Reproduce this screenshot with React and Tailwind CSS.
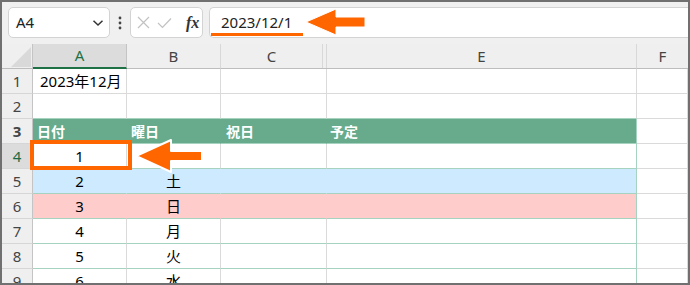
import React from "react";

const FONT = { fontFamily: "'Noto Sans', 'Noto Sans CJK JP', sans-serif" };

function Cell({ w, className = "", children }) {
  return (
    <div className={`h-full shrink-0 border-r border-b flex items-center ${w} ${className}`}>
      {children}
    </div>
  );
}

function RowHead({ n, selected }) {
  return (
    <div
      className={`w-[31px] h-full shrink-0 border-r border-b border-r-[#c4c4c4] border-b-[#d6d6d6] flex items-center justify-center text-[15px] ${
        selected ? "bg-[#dcdcdc] text-[#1d6b45]" : "bg-[#efefef] text-[#444]"
      }`}
    >
      {n}
    </div>
  );
}

const G = "border-[#dadada]";

function DataRow({ n, a, b, kind, selected }) {
  if (kind === "blue" || kind === "pink") {
    const bg = kind === "blue" ? "bg-[#cdeaff]" : "bg-[#ffcccc]";
    const br = kind === "blue" ? "border-r-[#cdeaff]" : "border-r-[#ffcccc]";
    return (
      <div className="flex h-[25px]">
        <RowHead n={n} />
        <Cell w={`w-[94px] justify-center ${bg} ${br} border-b-[#a6d2c0]`}>{a}</Cell>
        <Cell w={`w-[94px] justify-center ${bg} ${br} border-b-[#a6d2c0]`}>{b}</Cell>
        <Cell w={`w-[106px] ${bg} ${br} border-b-[#a6d2c0]`} />
        <Cell w={`w-[310px] ${bg} border-r-[#a6d2c0] border-b-[#a6d2c0]`} />
        <Cell w={`w-[51px] ${G}`} />
      </div>
    );
  }
  return (
    <div className="flex h-[25px]">
      <RowHead n={n} selected={selected} />
      <Cell w="w-[94px] justify-center border-r-[#dadada] border-b-[#a6d2c0]">{a}</Cell>
      <Cell w="w-[94px] justify-center border-r-[#dadada] border-b-[#a6d2c0]">{b}</Cell>
      <Cell w="w-[106px] border-r-[#dadada] border-b-[#a6d2c0]" />
      <Cell w="w-[310px] border-r-[#a6d2c0] border-b-[#a6d2c0]" />
      <Cell w={`w-[51px] ${G}`} />
    </div>
  );
}

export default function App() {
  return (
    <div
      className="relative w-[690px] h-[285px] border-2 border-[#707070] bg-white overflow-hidden text-black"
      style={FONT}
    >
      {/* formula bar */}
      <div className="h-[42px] bg-[#f0f0f0] flex items-start pt-[5px] pl-[6px]">
        <div className="w-[102px] h-[31px] bg-white border border-[#d3d3d3] rounded-[5px] flex items-center justify-between pl-[7px] pr-[5px]">
          <span className="text-[15px] text-[#222]">A4</span>
          <svg width="12" height="8" viewBox="0 0 12 8">
            <path d="M1.5 1.8 L6 6 L10.5 1.8" fill="none" stroke="#333" strokeWidth="1.5" />
          </svg>
        </div>
        <div className="w-[20px] h-[31px] flex items-center justify-center">
          <svg width="4" height="14" viewBox="0 0 4 14">
            <circle cx="2" cy="2" r="1.4" fill="#444" />
            <circle cx="2" cy="7" r="1.4" fill="#444" />
            <circle cx="2" cy="12" r="1.4" fill="#444" />
          </svg>
        </div>
        <div className="w-[73px] h-[31px] bg-white border border-[#d3d3d3] rounded-[5px] flex items-center pl-[6px] gap-[7px]">
          <svg width="13" height="13" viewBox="0 0 13 13">
            <path d="M1 1 L12 12 M12 1 L1 12" stroke="#c2c2c2" strokeWidth="1.2" />
          </svg>
          <svg width="15" height="12" viewBox="0 0 15 12">
            <path d="M1 6 L5.5 10.5 L14 1.5" fill="none" stroke="#c2c2c2" strokeWidth="1.2" />
          </svg>
          <span
            className="ml-[7px] text-[16px] italic font-bold text-[#333]"
            style={{ fontFamily: "'Liberation Serif', serif" }}
          >
            fx
          </span>
        </div>
        <div className="ml-[6px] flex-1 h-[31px] bg-white border border-r-0 border-[#d3d3d3] rounded-l-[5px] flex items-center pl-[11px]">
          <span className="text-[15px] text-[#222]">2023/12/1</span>
        </div>
      </div>

      {/* column header */}
      <div className="flex h-[25px] bg-[#efefef] text-[15px] text-[#444]">
        <div className="w-[31px] h-full shrink-0 border-r border-b border-r-[#c4c4c4] border-b-[#bdbdbd] flex items-end justify-end pr-[1px] pb-[1px]">
          <svg width="20" height="20" viewBox="0 0 20 20">
            <path d="M20 0 L20 20 L0 20 Z" fill="#d9d9d9" />
          </svg>
        </div>
        <div className="w-[94px] h-full shrink-0 bg-[#dcdcdc] border-b-2 border-b-[#1e7145] border-r border-r-[#c4c4c4] flex items-center justify-center text-[#1e7145]">
          A
        </div>
        <div className="w-[94px] h-full shrink-0 border-r border-b border-r-[#d8d8d8] border-b-[#bdbdbd] flex items-center justify-center">
          B
        </div>
        <div className="w-[106px] h-full shrink-0 flex border-b border-b-[#bdbdbd]">
          <div className="w-[102px] h-full border-r border-r-[#d8d8d8] flex items-center justify-center">C</div>
          <div className="w-[4px] h-full border-r border-r-[#d8d8d8]" />
        </div>
        <div className="w-[310px] h-full shrink-0 border-r border-b border-r-[#d8d8d8] border-b-[#bdbdbd] flex items-center justify-center">
          E
        </div>
        <div className="w-[51px] h-full shrink-0 border-b border-b-[#bdbdbd] flex items-center justify-center">
          F
        </div>
      </div>

      {/* rows */}
      <div className="text-[15px]">
        <div className="flex h-[25px]">
          <RowHead n="1" />
          <Cell w={`w-[94px] ${G} pl-[7px] whitespace-nowrap overflow-visible`}>2023年12月</Cell>
          <Cell w={`w-[94px] ${G}`} />
          <Cell w={`w-[106px] ${G}`} />
          <Cell w={`w-[310px] ${G}`} />
          <Cell w={`w-[51px] ${G}`} />
        </div>
        <div className="flex h-[25px]">
          <RowHead n="2" />
          <Cell w="w-[94px] border-r-[#dadada] border-b-[#a6d2c0]" />
          <Cell w="w-[94px] border-r-[#dadada] border-b-[#a6d2c0]" />
          <Cell w="w-[106px] border-r-[#dadada] border-b-[#a6d2c0]" />
          <Cell w="w-[310px] border-r-[#dadada] border-b-[#a6d2c0]" />
          <Cell w={`w-[51px] ${G}`} />
        </div>
        <div className="flex h-[25px] text-white font-bold text-[14px]">
          <RowHead n="3" />
          <Cell w="w-[94px] bg-[#67ab8c] border-r-[#67ab8c] border-b-[#a6d2c0] pl-[4px]">日付</Cell>
          <Cell w="w-[94px] bg-[#67ab8c] border-r-[#67ab8c] border-b-[#a6d2c0] pl-[4px]">曜日</Cell>
          <Cell w="w-[106px] bg-[#67ab8c] border-r-[#67ab8c] border-b-[#a6d2c0] pl-[5px]">祝日</Cell>
          <Cell w="w-[310px] bg-[#67ab8c] border-r-[#a6d2c0] border-b-[#a6d2c0] pl-[3px]">予定</Cell>
          <Cell w={`w-[51px] ${G}`} />
        </div>
        <DataRow n="4" a="1" b="" selected />
        <DataRow n="5" a="2" b="土" kind="blue" />
        <DataRow n="6" a="3" b="日" kind="pink" />
        <DataRow n="7" a="4" b="月" />
        <DataRow n="8" a="5" b="火" />
        <DataRow n="9" a="6" b="水" />
      </div>

      {/* overlays */}
      <div className="absolute left-[209px] top-[31px] w-[92px] h-[3px] bg-[#ff6600]" />
      <svg className="absolute left-[300px] top-[4px]" width="68" height="34" viewBox="0 0 68 34">
        <path
          d="M4 16 L34 3 L34 11 L63 11 L63 21 L34 21 L34 29 Z"
          fill="#ff6600"
          stroke="#ffffff"
          strokeWidth="1"
        />
      </svg>

      <div className="absolute left-[28px] top-[138px] w-[102px] h-[30px] border-[4px] border-[#ff6600]" />
      <svg className="absolute left-[130px] top-[134px]" width="74" height="40" viewBox="0 0 74 40">
        <path
          d="M4 20 L39 4 L39 15 L70 15 L70 25 L39 25 L39 36 Z"
          fill="#ff6600"
          stroke="#ffffff"
          strokeWidth="2"
          strokeLinejoin="round"
        />
      </svg>
    </div>
  );
}
